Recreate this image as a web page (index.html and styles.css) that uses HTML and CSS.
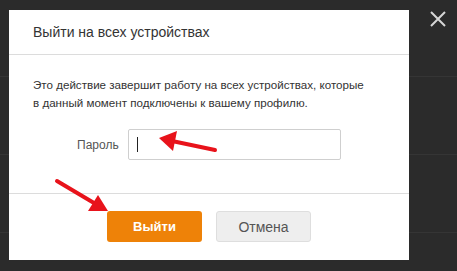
FILE: index.html
```html
<!DOCTYPE html>
<html lang="ru">
<head>
    <meta charset="UTF-8">
    <title>Выйти на всех устройствах</title>
    <link rel="stylesheet" href="styles.css">
</head>
<body>
    <div class="page">
        <div class="bg-row"></div>
        <div class="bg-row"></div>
        <div class="bg-row"></div>
    </div>

    <div class="modal">
        <div class="modal-header">Выйти на всех устройствах</div>
        <div class="modal-body">
            <p class="modal-text">Это действие завершит работу на всех устройствах, которые<br>в данный момент подключены к вашему профилю.</p>
            <div class="field">
                <label class="field-label">Пароль</label>
                <div class="field-input"><span class="caret"></span></div>
            </div>
        </div>
        <div class="modal-footer">
            <button class="btn btn-primary">Выйти</button>
            <button class="btn btn-cancel">Отмена</button>
        </div>
    </div>

    <!-- close cross -->
    <svg class="close" width="16" height="16" viewBox="0 0 16 16">
        <path d="M1 1 L15 15 M15 1 L1 15" stroke="#d6d6d6" stroke-width="2"/>
    </svg>

    <!-- red arrows -->
    <svg class="arrows" width="457" height="271" viewBox="0 0 457 271">
        <line x1="215" y1="150" x2="172" y2="141" stroke="#e8131b" stroke-width="4" stroke-linecap="round"/>
        <polygon points="159,138 177,131 173,151" fill="#e8131b"/>
        <line x1="57" y1="181" x2="94" y2="203" stroke="#e8131b" stroke-width="4" stroke-linecap="round"/>
        <polygon points="108,211 88,211 98,195" fill="#e8131b"/>
    </svg>
</body>
</html>
```

FILE: styles.css
```css
body {
    margin: 0;
    width: 457px;
    height: 271px;
    overflow: hidden;
    background: #2b2b2b;
    font-family: 'Liberation Sans', Arial, sans-serif;
    position: relative;
}

.page {
    display: flex;
    flex-direction: column;
}

.bg-row {
    height: 77px;
    border-bottom: 1px solid #353535;
}

.bg-row:first-child {
    height: 76px;
}

.modal {
    position: absolute;
    left: 9px;
    top: 10px;
    width: 400px;
    height: 250px;
    background: #fff;
    display: flex;
    flex-direction: column;
}

.modal-header {
    height: 44px;
    border-bottom: 1px solid #dcdcdc;
    padding: 0 24px;
    display: flex;
    align-items: center;
    font-size: 14px;
    color: #333;
}

.modal-body {
    height: 139px;
    border-bottom: 1px solid #dcdcdc;
    padding: 21px 24px 0;
    box-sizing: border-box;
}

.modal-text {
    margin: 0;
    font-size: 11.6px;
    line-height: 18px;
    color: #333;
}

.field {
    display: flex;
    align-items: center;
    margin-top: 17px;
    margin-left: 44px;
}

.field-label {
    font-size: 12px;
    color: #555;
    margin-right: 9px;
}

.field-input {
    width: 203px;
    height: 29px;
    border: 1px solid #cfcfcf;
    border-radius: 2px;
    display: flex;
    align-items: center;
    padding-left: 8px;
}

.caret {
    width: 1px;
    height: 15px;
    background: #222;
}

.modal-footer {
    flex: 1;
    display: flex;
    justify-content: center;
    align-items: flex-start;
    gap: 14px;
    padding-top: 17px;
}

.btn {
    height: 31px;
    width: 95px;
    border-radius: 3px;
    font-family: 'Liberation Sans', Arial, sans-serif;
    font-size: 14px;
    cursor: pointer;
}

.btn-primary {
    background: #ee8208;
    border: none;
    color: #fff;
    font-weight: bold;
    font-size: 13px;
}

.btn-cancel {
    background: #eeeeee;
    border: 1px solid #dedede;
    color: #555;
}

.close {
    position: absolute;
    left: 430px;
    top: 11px;
}

.arrows {
    position: absolute;
    left: 0;
    top: 0;
}
```
